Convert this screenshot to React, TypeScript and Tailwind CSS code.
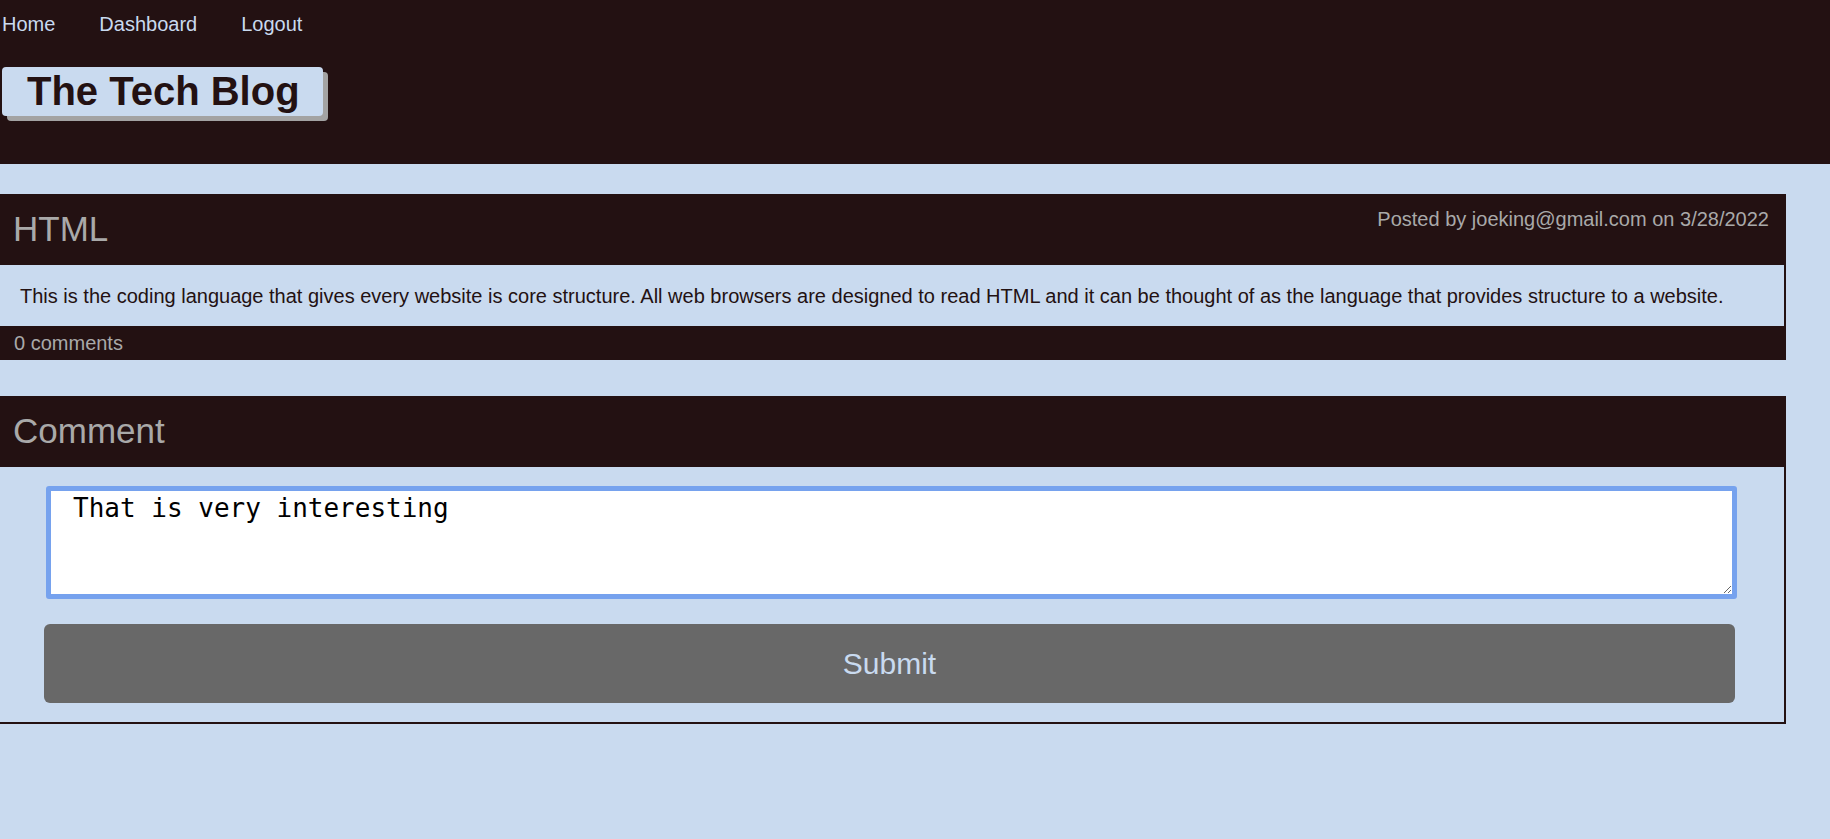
import { useState } from "react";

const navLinks = ["Home", "Dashboard", "Logout"];

const post = {
  title: "HTML",
  author: "joeking@gmail.com",
  date: "3/28/2022",
  body: "This is the coding language that gives every website is core structure. All web browsers are designed to read HTML and it can be thought of as the language that provides structure to a website.",
  comments: 0,
};

const App = () => {
  const [comment, setComment] = useState("That is very interesting");

  return (
    <div className="min-h-screen bg-[#c9daef] font-['Liberation_Sans',Arial,sans-serif]">
      <header className="h-[164px] bg-[#231112]">
        <nav className="flex gap-[44px] pl-[2px] pt-[13px] text-[20px] leading-[23px] text-[#c9daef]">
          {navLinks.map((link) => (
            <a key={link} href="#" className="cursor-pointer">
              {link}
            </a>
          ))}
        </nav>
        <div className="ml-[2px] mt-[31px]">
          <h1 className="inline-block h-[49px] rounded-[4px] bg-[#c9daef] pl-[25px] pr-[23px] text-[40px] font-bold leading-[49px] text-[#231112] shadow-[5px_5px_0_#a3a3a3]">
            The Tech Blog
          </h1>
        </div>
      </header>

      <main className="pt-[30px]">
        {/* Post */}
        <section className="w-[1786px] bg-[#231112]">
          <div className="flex h-[71px] justify-between">
            <h2 className="flex items-center pl-[13px] text-[35px] text-[#a9a9a9]">
              {post.title}
            </h2>
            <p className="pr-[17px] pt-[14px] text-[20px] leading-[23px] text-[#a9a9a9]">
              Posted by {post.author} on {post.date}
            </p>
          </div>
          <div className="mr-[2px] flex h-[61px] items-center bg-[#c9daef] pl-[20px] text-[20px] text-[#231112]">
            {post.body}
          </div>
          <div className="flex h-[34px] items-center pl-[14px] text-[20px] text-[#a9a9a9]">
            {post.comments} comments
          </div>
        </section>

        {/* Comment form */}
        <section className="mt-[36px] w-[1786px] border-b-2 border-r-2 border-[#231112]">
          <h2 className="flex h-[71px] items-center bg-[#231112] pl-[13px] text-[35px] text-[#a9a9a9]">
            Comment
          </h2>
          <form
            className="flex flex-col pb-[19px] pt-[19px]"
            onSubmit={(e) => e.preventDefault()}
          >
            <textarea
              value={comment}
              onChange={(e) => setComment(e.target.value)}
              className="ml-[46px] h-[113px] w-[1691px] rounded-[3px] border-[5px] border-[#76a2ee] bg-white px-[22px] pt-0 font-['DejaVu_Sans_Mono',monospace] text-[26px] leading-[34px] text-black outline-none"
            />
            <button
              type="submit"
              className="ml-[44px] mt-[25px] h-[79px] w-[1691px] rounded-[6px] bg-[#686868] text-[30px] text-[#c9daef]"
            >
              Submit
            </button>
          </form>
        </section>
      </main>
    </div>
  );
};

export default App;
